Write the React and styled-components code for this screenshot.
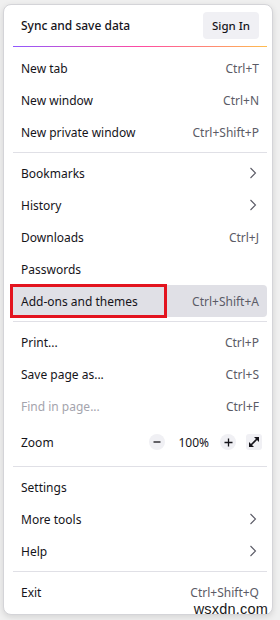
import React from "react";
import styled, { createGlobalStyle } from "styled-components";

const GlobalStyle = createGlobalStyle`
  html, body {
    margin: 0;
    padding: 0;
    background: #f0f0f0;
  }
  body {
    font-family: "Noto Sans", "Open Sans", sans-serif;
    color: #15141a;
    -webkit-font-smoothing: antialiased;
  }
`;

const Page = styled.div`
  position: relative;
  width: 280px;
  height: 620px;
  padding: 4px 0 0 3px;
  box-sizing: border-box;
  overflow: hidden;
`;

const Panel = styled.div`
  width: 270px;
  height: 611px;
  box-sizing: border-box;
  background: #fff;
  border: 1px solid #d4d4d8;
  border-radius: 8px;
  box-shadow: 0 2px 6px rgba(0, 0, 0, 0.12);
  padding: 0 5px 0 6px;
  display: flex;
  flex-direction: column;
`;

const Header = styled.div`
  height: 41px;
  display: flex;
  align-items: center;
  justify-content: space-between;
  padding: 0 8px 0 11px;
  font-size: 12px;
  font-weight: 500;
`;

const SignIn = styled.button`
  width: 56px;
  height: 27px;
  border: none;
  border-radius: 4px;
  background: #f0f0f4;
  color: #15141a;
  font-family: inherit;
  font-size: 11.5px;
  font-weight: 500;
  padding: 0;
`;

const Gradient = styled.div`
  height: 1px;
  margin: 0 0 5px 3px;
  background: linear-gradient(90deg, #9059ff, #ff4aa2 50%, #ffbd4f);
`;

const Separator = styled.div`
  height: 1px;
  margin: 4px 0 4px 3px;
  background: #e0e0e6;
`;

const Item = styled.div`
  height: ${(p) => p.$h || 32}px;
  flex-shrink: 0;
  display: flex;
  align-items: center;
  justify-content: space-between;
  padding: 0 8px 0 11px;
  border-radius: 4px;
  font-size: 12px;
  position: relative;
  color: ${(p) => (p.$disabled ? "#a4a4ad" : "#15141a")};
  background: ${(p) => (p.$active ? "#e0e0e6" : "transparent")};
`;

const Shortcut = styled.span`
  color: #5b5b66;
  font-size: 12px;
`;

const Chevron = styled.svg`
  width: 8px;
  height: 12px;
  margin-right: 2px;
`;

const Outline = styled.div`
  position: absolute;
  left: 0;
  top: -1px;
  width: 157px;
  height: 34px;
  box-sizing: border-box;
  border: 3px solid #e3141f;
`;

const ZoomControls = styled.div`
  display: flex;
  align-items: center;
`;

const RoundBtn = styled.span`
  width: 16px;
  height: 16px;
  border-radius: 50%;
  background: #f0f0f4;
  display: flex;
  align-items: center;
  justify-content: center;
`;

const ZoomValue = styled.span`
  font-size: 12px;
  margin: 0 11px 0 13px;
`;

const ExpandBtn = styled.span`
  width: 16px;
  height: 16px;
  border-radius: 3px;
  background: #f0f0f4;
  margin: 0 -3px 0 10px;
  display: flex;
  align-items: center;
  justify-content: center;
`;

const Watermark = styled.div`
  position: absolute;
  right: 12px;
  bottom: 3px;
  font-family: "Liberation Sans", Arial, sans-serif;
  font-size: 14.5px;
  color: #1a1a1a;
  letter-spacing: 0.2px;
`;

const Arrow = () => (
  <Chevron viewBox="0 0 8 12">
    <path d="M1.5 1 L6.5 6 L1.5 11" fill="none" stroke="#5b5b66" strokeWidth="1.1" />
  </Chevron>
);

const sections = [
  [
    ["New tab", "Ctrl+T"],
    ["New window", "Ctrl+N"],
    ["New private window", "Ctrl+Shift+P"],
  ],
  [
    ["Bookmarks", ">"],
    ["History", ">"],
    ["Downloads", "Ctrl+J"],
    ["Passwords", ""],
    ["Add-ons and themes", "Ctrl+Shift+A", "active"],
  ],
  [
    ["Print...", "Ctrl+P"],
    ["Save page as...", "Ctrl+S"],
    ["Find in page...", "Ctrl+F", "disabled"],
    ["Zoom", "zoom"],
  ],
  [
    ["Settings", ""],
    ["More tools", ">"],
    ["Help", ">"],
  ],
  [["Exit", "Ctrl+Shift+Q"]],
];

function Right({ value }) {
  if (value === ">") return <Arrow />;
  if (value === "zoom") {
    return (
      <ZoomControls>
        <RoundBtn>
          <svg width="8" height="8" viewBox="0 0 8 8">
            <path d="M0.5 4 H7.5" stroke="#15141a" strokeWidth="1.3" />
          </svg>
        </RoundBtn>
        <ZoomValue>100%</ZoomValue>
        <RoundBtn>
          <svg width="9" height="9" viewBox="0 0 9 9">
            <path d="M0.5 4.5 H8.5 M4.5 0.5 V8.5" stroke="#15141a" strokeWidth="1.3" />
          </svg>
        </RoundBtn>
        <ExpandBtn>
          <svg width="12" height="12" viewBox="0 0 12 12">
            <path d="M3 9 L9 3" stroke="#15141a" strokeWidth="1.6" />
            <path d="M6 1 H11 V6 Z" fill="#15141a" />
            <path d="M1 6 V11 H6 Z" fill="#15141a" />
          </svg>
        </ExpandBtn>
      </ZoomControls>
    );
  }
  return <Shortcut>{value}</Shortcut>;
}

export default function App() {
  return (
    <>
      <GlobalStyle />
      <Page>
        <Panel>
          <Header>
            <span>Sync and save data</span>
            <SignIn>Sign In</SignIn>
          </Header>
          <Gradient />
          {sections.map((rows, i) => (
            <React.Fragment key={i}>
              {i > 0 && <Separator />}
              {rows.map(([label, right, state]) => (
                <Item
                  key={label}
                  $active={state === "active"}
                  $disabled={state === "disabled"}
                  $h={right === "zoom" ? 40 : 32}
                >
                  {state === "active" && <Outline />}
                  <span>{label}</span>
                  <Right value={right} />
                </Item>
              ))}
            </React.Fragment>
          ))}
        </Panel>
        <Watermark>wsxdn.com</Watermark>
      </Page>
    </>
  );
}
